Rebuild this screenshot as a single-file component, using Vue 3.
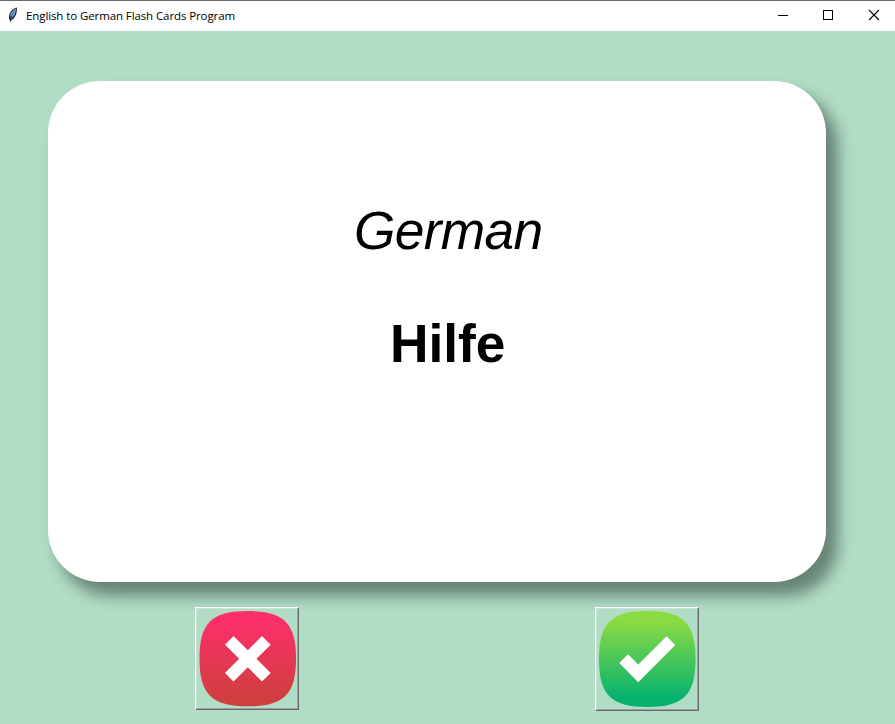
<script setup>
import { ref } from 'vue'

const title = 'English to German Flash Cards Program'
const language = ref('German')
const word = ref('Hilfe')
</script>

<template>
  <div class="window">
    <header class="titlebar">
      <svg class="feather" width="12" height="16" viewBox="0 0 12 16">
        <path d="M9.8 .4C6.6 1 3.2 4.2 2.2 8C1.7 10 1.9 11.8 2.8 12.9L3.6 15.6L4.4 12.9C8 11.4 10.6 6 9.8 .4Z" fill="#202a3a" />
        <path d="M8.8 1.6C6 3.2 3.7 6 3 9.4L4.2 8.8L4.1 11.4C7.2 9.4 9.2 5.6 8.8 1.6Z" fill="#7fa6d6" />
        <path d="M7.6 3.8C5.6 6.4 4.3 9 3.6 15" fill="none" stroke="#2b3a50" stroke-width=".6" />
      </svg>
      <h1 class="title">{{ title }}</h1>
      <nav class="controls">
        <svg width="45" height="30" viewBox="0 0 45 30" shape-rendering="crispEdges">
          <path d="M18 14.5H28" stroke="#000" />
        </svg>
        <svg width="45" height="30" viewBox="0 0 45 30" shape-rendering="crispEdges">
          <rect x="18.5" y="9.5" width="9" height="9" fill="none" stroke="#000" />
        </svg>
        <svg width="45" height="30" viewBox="0 0 45 30">
          <path d="M19 9L29 19M29 9L19 19" stroke="#000" stroke-width="1.1" />
        </svg>
      </nav>
    </header>

    <main class="body">
      <section class="card">
        <p class="language">{{ language }}</p>
        <p class="word">{{ word }}</p>
      </section>

      <div class="actions">
        <button class="answer wrong" aria-label="Unknown">
          <svg width="100" height="99" viewBox="197 609 100 99">
            <defs>
              <linearGradient id="red" x1="0" y1="0" x2="0" y2="1">
                <stop offset="0.12" stop-color="#fc2f68" />
                <stop offset="0.9" stop-color="#d03e3f" />
              </linearGradient>
            </defs>
            <path d="M247.8 611C284 611 296 623 296 658.7C296 694 284 706.3 247.8 706.3C211.5 706.3 199.5 694 199.5 658.7C199.5 623 211.5 611 247.8 611Z" fill="url(#red)" />
            <path d="M233.5 636L247.8 650.2L262 636L270.7 644.7L256.5 658.8L270.7 672.9L262 681.5L247.8 667.3L233.5 681.5L225 672.9L239.2 658.8L225 644.7Z" fill="#fff" />
          </svg>
        </button>
        <button class="answer right" aria-label="Known">
          <svg width="100" height="100" viewBox="597 609 100 100">
            <defs>
              <linearGradient id="green" x1="0" y1="0" x2="0" y2="1">
                <stop offset="0.1" stop-color="#8ddb43" />
                <stop offset="0.9" stop-color="#06b26e" />
              </linearGradient>
            </defs>
            <path d="M647.3 611C683.5 611 695.5 623 695.5 659C695.5 695 683.5 707 647.3 707C611 707 599 695 599 659C599 623 611 611 647.3 611Z" fill="url(#green)" />
            <path d="M666.6 636.2L675.3 645L638.2 682.2L619.3 663L628 654.3L638.2 664.6Z" fill="#fff" />
          </svg>
        </button>
      </div>
    </main>
  </div>
</template>

<style>
body {
  margin: 0;
}
</style>

<style scoped>
.window {
  box-sizing: border-box;
  width: 895px;
  height: 724px;
  overflow: hidden;
  display: flex;
  flex-direction: column;
  border-top: 1px solid #6b696b;
  background: #b1ddc6;
  font-family: 'Liberation Sans', Arial, sans-serif;
  color: #000;
}

.titlebar {
  flex: none;
  display: flex;
  align-items: center;
  height: 30px;
  padding-left: 7px;
  background: #fff;
}

.feather {
  margin-bottom: 2px;
}

.title {
  margin: 0 auto 0 7px;
  font: 400 11.5px/16px 'Open Sans', 'Noto Sans', sans-serif;
  letter-spacing: -0.1px;
  white-space: nowrap;
}

.controls {
  display: flex;
}

.body {
  flex: 1;
  padding: 50px 69.5px 0 48px;
}

.card {
  box-sizing: border-box;
  height: 501px;
  padding: 119px 0 0 22px;
  border-radius: 52px;
  background: #fff;
  box-shadow: 11px 13px 15px 1px rgba(0, 10, 5, 0.42);
  text-align: center;
}

.language,
.word {
  margin: 0;
  font-size: 53.33px;
  line-height: 61px;
}

.language {
  padding-left: 1px;
  font-style: italic;
  letter-spacing: -0.7px;
}

.word {
  margin-top: 52px;
  font-weight: 700;
}

.actions {
  display: flex;
  align-items: flex-start;
  gap: 296px;
  padding: 25px 0 0 147px;
}

.answer {
  flex: none;
  display: flex;
  padding: 0;
  border: 2px solid;
  border-color: #fff #696969 #696969 #fff;
  background: #b1ddc6;
  position: relative;
}

.answer::after {
  content: '';
  position: absolute;
  inset: -1px;
  border: 1px solid;
  border-color: #c9e4d6 #a0a0a0 #a0a0a0 #c9e4d6;
}
</style>
